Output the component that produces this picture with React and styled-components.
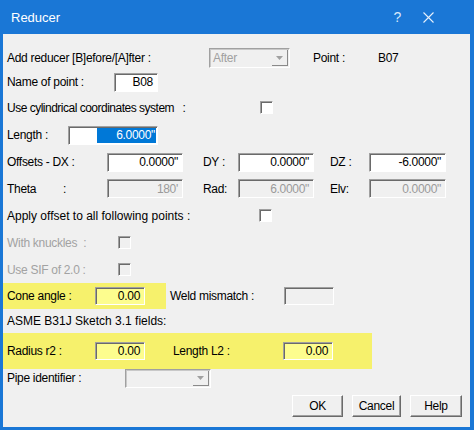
import React from 'react';
import styled, { createGlobalStyle } from 'styled-components';

const Global = createGlobalStyle`
  html, body { margin: 0; padding: 0; background: #f0f0f0; }
  body { font-family: 'Liberation Sans', Arial, sans-serif; }
`;

const Window = styled.div`
  width: 474px;
  height: 430px;
  box-sizing: border-box;
  background: #1a77d6;
  display: flex;
  flex-direction: column;
  overflow: hidden;
`;

const TitleBar = styled.div`
  height: 34px;
  flex: none;
  display: flex;
  align-items: center;
  color: #fff;
  font-size: 13px;
  padding-left: 11px;
  padding-right: 30px;
`;

const TitleText = styled.div`
  flex: 1;
`;

const TitleBtn = styled.div`
  width: 31px;
  display: flex;
  justify-content: center;
  align-items: center;
  color: #d8e8fa;
  font-size: 14px;
`;

const Body = styled.div`
  flex: 1;
  margin: 0 4px 3px 3px;
  background: #f0f0f0;
  padding-top: 12px;
  color: #000;
  font-size: 12px;
  letter-spacing: -0.3px;
  display: flex;
  flex-direction: column;
`;

const Row = styled.div`
  display: flex;
  align-items: center;
  height: ${p => p.$h}px;
  padding-left: 4px;
  flex: none;
`;

const Highlight = styled.div`
  display: flex;
  align-items: center;
  align-self: stretch;
  width: ${p => p.$w}px;
  margin-left: -4px;
  padding-left: 4px;
  box-sizing: border-box;
  background: #f6f16c;
`;

const Label = styled.div`
  width: ${p => p.$w}px;
  flex: none;
  white-space: nowrap;
  color: ${p => (p.$disabled ? '#a2a2a2' : '#000')};
  letter-spacing: ${p => (p.$ls !== undefined ? `${p.$ls}px` : 'inherit')};
  position: relative;
`;

const Colon = styled.span`
  position: absolute;
  left: ${p => p.$x}px;
`;

const Spacer = styled.div`
  width: ${p => p.$w}px;
  flex: none;
`;

const Input = styled.div`
  width: ${p => p.$w}px;
  height: ${p => p.$h || 19}px;
  flex: none;
  box-sizing: border-box;
  border-top: 1px solid #a0a0a0;
  border-left: 1px solid #a0a0a0;
  border-right: 1px solid #fff;
  border-bottom: 1px solid #fff;
  box-shadow: inset 1px 1px 0 #6a6a6a;
  background: ${p => (p.$yellow ? '#fdfd8e' : p.$disabled ? '#f0f0f0' : '#fff')};
  color: ${p => (p.$disabled ? '#9a9a9a' : '#000')};
  display: flex;
  align-items: center;
  justify-content: flex-end;
  padding-right: 4px;
  white-space: nowrap;
`;

const Selection = styled.span`
  background: #0078d7;
  color: #fff;
  align-self: stretch;
  display: flex;
  align-items: center;
  justify-content: flex-end;
  width: 58px;
  padding-right: 1px;
  margin-top: 1px;
  margin-bottom: 1px;
`;

const Select = styled.div`
  width: ${p => p.$w}px;
  height: ${p => p.$h}px;
  flex: none;
  box-sizing: border-box;
  border-top: 1px solid #a0a0a0;
  border-left: 1px solid #a0a0a0;
  border-right: 1px solid #fff;
  border-bottom: 1px solid #fff;
  box-shadow: inset 1px 1px 0 #c8c8c8;
  display: flex;
  align-items: center;
  color: #a0a0a0;
  padding-left: 3px;
`;

const SelectText = styled.div`
  flex: 1;
`;

const Arrow = styled.div`
  width: 16px;
  align-self: stretch;
  margin: 1px;
  box-sizing: border-box;
  border-right: 1px solid #8a8a8a;
  border-bottom: 1px solid #8a8a8a;
  display: flex;
  align-items: center;
  justify-content: center;
`;

const Check = styled.div`
  width: 13px;
  height: 13px;
  flex: none;
  box-sizing: border-box;
  border-top: 1px solid #a0a0a0;
  border-left: 1px solid #a0a0a0;
  border-right: 1px solid #fff;
  border-bottom: 1px solid #fff;
  box-shadow: inset 1px 1px 0 #6a6a6a;
  background: ${p => (p.$disabled ? '#f0f0f0' : '#fff')};
`;

const ButtonRow = styled.div`
  display: flex;
  justify-content: flex-end;
  gap: 9px;
  padding-right: 8px;
  margin-top: 8px;
`;

const Button = styled.div`
  width: ${p => p.$w}px;
  height: 22px;
  box-sizing: border-box;
  border-top: 1px solid #fff;
  border-left: 1px solid #fff;
  border-right: 1px solid #6a6a6a;
  border-bottom: 1px solid #6a6a6a;
  box-shadow: inset -1px -1px 0 #a0a0a0;
  display: flex;
  align-items: center;
  justify-content: center;
  font-size: 12px;
`;

const DownArrow = () => (
  <svg width="7" height="4" viewBox="0 0 7 4">
    <path d="M0 0h7L3.5 4z" fill="#a0a0a0" />
  </svg>
);

const CloseIcon = () => (
  <svg width="11" height="11" viewBox="0 0 11 11">
    <path d="M0.5 0.5L10.5 10.5M10.5 0.5L0.5 10.5" stroke="#e6f0fb" strokeWidth="1.1" />
  </svg>
);

export default function App() {
  return (
    <Window>
      <Global />
      <TitleBar>
        <TitleText>Reducer</TitleText>
        <TitleBtn>?</TitleBtn>
        <TitleBtn>
          <CloseIcon />
        </TitleBtn>
      </TitleBar>
      <Body>
        <Row $h={24}>
          <Label $w={202}>Add reducer [B]efore/[A]fter :</Label>
          <Select $w={81} $h={20}>
            <SelectText>After</SelectText>
            <Arrow><DownArrow /></Arrow>
          </Select>
          <Spacer $w={23} />
          <Label $w={65}>Point :</Label>
          <Label $w={40}>B07</Label>
        </Row>
        <Row $h={24}>
          <Label $w={107}>Name of point :</Label>
          <Input $w={44}>B08</Input>
        </Row>
        <Row $h={27}>
          <Label $w={253} $ls={-0.5}>Use cylindrical coordinates system&nbsp;&nbsp;&nbsp;:</Label>
          <Check />
        </Row>
        <Row $h={28}>
          <Label $w={61}>Length :</Label>
          <Input $w={90} style={{ paddingRight: 1 }}>
            <Selection>6.0000"</Selection>
          </Input>
        </Row>
        <Row $h={26}>
          <Label $w={100}>Offsets - DX :</Label>
          <Input $w={76}>0.0000"</Input>
          <Spacer $w={20} />
          <Label $w={35}>DY :</Label>
          <Input $w={76}>0.0000"</Input>
          <Spacer $w={16} />
          <Label $w={39}>DZ :</Label>
          <Input $w={77}>-6.0000"</Input>
        </Row>
        <Row $h={27}>
          <Label $w={100}>Theta<Colon $x={56}>:</Colon></Label>
          <Input $w={76} $disabled>180'</Input>
          <Spacer $w={20} />
          <Label $w={35}>Rad:</Label>
          <Input $w={76} $disabled>6.0000"</Input>
          <Spacer $w={16} />
          <Label $w={39}>Elv:</Label>
          <Input $w={77} $disabled>0.0000"</Input>
        </Row>
        <Row $h={27}>
          <Label $w={252} $ls={0}>Apply offset to all following points :</Label>
          <Check />
        </Row>
        <Row $h={27}>
          <Label $w={111} $disabled>With knuckles&nbsp;&nbsp;:</Label>
          <Check $disabled />
        </Row>
        <Row $h={27}>
          <Label $w={111} $disabled>Use SIF of 2.0 :</Label>
          <Check $disabled />
        </Row>
        <Row $h={26}>
          <Highlight $w={163}>
            <Label $w={88}>Cone angle :</Label>
            <Input $w={50} $h={18} $yellow>0.00</Input>
          </Highlight>
          <Spacer $w={4} />
          <Label $w={114}>Weld mismatch :</Label>
          <Input $w={50} $h={18} $disabled />
        </Row>
        <Row $h={24}>
          <Label $w={200} $ls={0}>ASME B31J Sketch 3.1 fields:</Label>
        </Row>
        <Row $h={36}>
          <Highlight $w={369}>
            <Label $w={88}>Radius r2 :</Label>
            <Input $w={50} $h={18} $yellow>0.00</Input>
            <Spacer $w={28} />
            <Label $w={110}>Length L2 :</Label>
            <Input $w={50} $h={18} $yellow>0.00</Input>
          </Highlight>
        </Row>
        <Row $h={18}>
          <Label $w={118}>Pipe identifier :</Label>
          <Select $w={86} $h={19}>
            <SelectText />
            <Arrow><DownArrow /></Arrow>
          </Select>
        </Row>
        <ButtonRow>
          <Button $w={51}>OK</Button>
          <Button $w={49}>Cancel</Button>
          <Button $w={52}>Help</Button>
        </ButtonRow>
      </Body>
    </Window>
  );
}
